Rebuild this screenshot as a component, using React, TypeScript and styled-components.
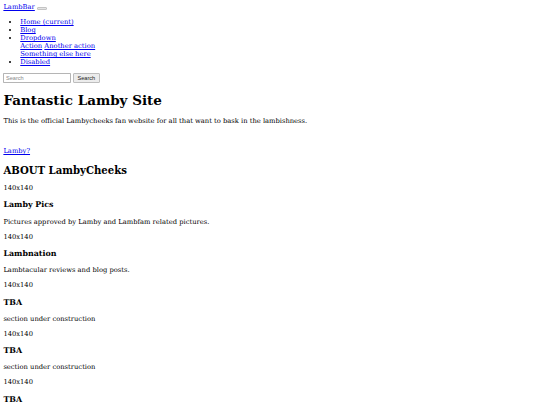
import React from "react";
import styled, { createGlobalStyle } from "styled-components";

const Global = createGlobalStyle`
  html, body { background: #ffffff; }
  body {
    margin: 3.375px;
    font-family: "DejaVu Serif", serif;
    font-size: 6.75px;
    line-height: normal;
    color: #000000;
  }
  a { color: #0000ee; text-decoration: underline; }
`;

const Nav = styled.nav`
  display: block;
`;

const Brand = styled.a``;

const Toggler = styled.button`
  display: inline-block;
  vertical-align: baseline;
  width: 10px;
  height: 3px;
  margin-left: 2.5px;
  padding: 0;
  border: 0.5px solid #c4c4c4;
  border-radius: 1px;
  background: #e4e4e4;
`;

const NavList = styled.ul`
  margin: 6.75px 0;
  padding-left: 16.875px;
  list-style: disc;
`;

const NavItem = styled.li``;

const DropdownMenu = styled.div`
  display: block;
`;

const Divider = styled.div`
  height: 0;
`;

const SearchForm = styled.form`
  display: block;
  margin: 0;
`;

const SearchInput = styled.input`
  box-sizing: border-box;
  width: 67.5px;
  height: 10.3px;
  padding: 0 1.6px;
  margin: 0;
  border: 0.6px solid #b5b5b5;
  border-radius: 0.8px;
  font-family: "Liberation Sans", Arial, sans-serif;
  font-size: 5.6px;
  vertical-align: middle;
  background: #ffffff;
  &::placeholder { color: #8a8a8a; }
`;

const SearchButton = styled.button`
  box-sizing: border-box;
  height: 10.3px;
  width: 27px;
  margin: 0 0 0 2px;
  padding: 0;
  border: 0.6px solid #bdbdbd;
  border-radius: 1px;
  background: #ececec;
  font-family: "Liberation Sans", Arial, sans-serif;
  font-size: 5.6px;
  color: #222222;
  vertical-align: middle;
`;

const Main = styled.main`
  display: block;
`;

const Title = styled.h1`
  font-size: 13.5px;
  font-weight: bold;
  margin: 9.05px 0;
`;

const Lead = styled.p`
  margin: 6.75px 0;
`;

const LinkPara = styled.p`
  margin: 22px 0 6.75px;
`;

const SectionTitle = styled.h2`
  font-size: 10.125px;
  font-weight: bold;
  margin: 8.4px 0;
`;

const Card = styled.div`
  display: block;
`;

const Thumb = styled.div`
  display: block;
`;

const CardTitle = styled.h3`
  font-size: 7.9px;
  font-weight: bold;
  margin: 8.4px 0;
`;

const CardText = styled.p`
  margin: 6.75px 0;
`;

const cards = [
  { title: "Lamby Pics", text: "Pictures approved by Lamby and Lambfam related pictures." },
  { title: "Lambnation", text: "Lambtacular reviews and blog posts." },
  { title: "TBA", text: "section under construction" },
  { title: "TBA", text: "section under construction" },
  { title: "TBA", text: "section under construction" },
  { title: "TBA", text: "section under construction" },
];

export default function App() {
  return (
    <>
      <Global />
      <Nav>
        <Brand href="#">LambBar</Brand>
        <Toggler type="button" aria-label="Toggle navigation" />
        <NavList>
          <NavItem><a href="#">Home (current)</a></NavItem>
          <NavItem><a href="#">Blog</a></NavItem>
          <NavItem>
            <a href="#">Dropdown</a>
            <DropdownMenu>
              <a href="#">Action</a> <a href="#">Another action</a>
              <Divider />
              <a href="#">Something else here</a>
            </DropdownMenu>
          </NavItem>
          <NavItem><a href="#">Disabled</a></NavItem>
        </NavList>
        <SearchForm onSubmit={(e) => e.preventDefault()}>
          <SearchInput type="search" placeholder="Search" aria-label="Search" />
          <SearchButton type="submit">Search</SearchButton>
        </SearchForm>
      </Nav>
      <Main>
        <Title>Fantastic Lamby Site</Title>
        <Lead>This is the official Lambycheeks fan website for all that want to bask in the lambishness.</Lead>
        <LinkPara><a href="#">Lamby?</a></LinkPara>
        <SectionTitle>ABOUT LambyCheeks</SectionTitle>
        {cards.map((c, i) => (
          <Card key={i}>
            <Thumb>140x140</Thumb>
            <CardTitle>{c.title}</CardTitle>
            <CardText>{c.text}</CardText>
          </Card>
        ))}
      </Main>
    </>
  );
}
